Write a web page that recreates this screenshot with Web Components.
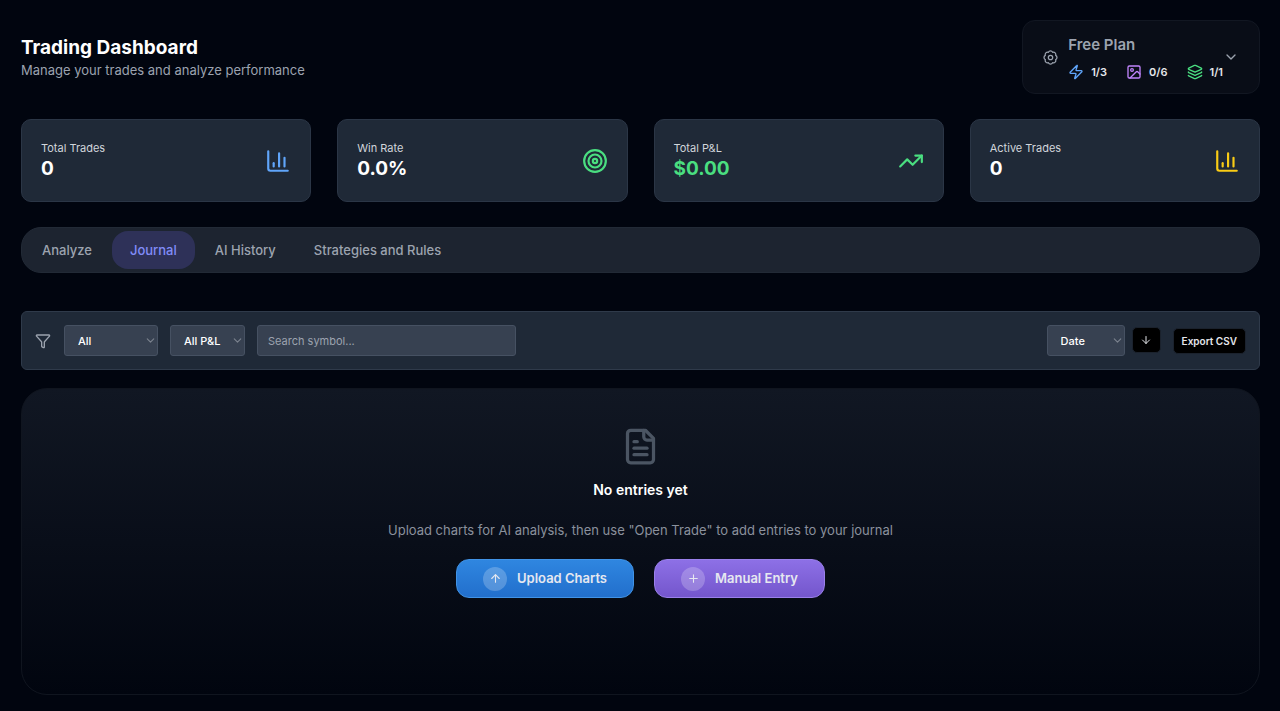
<!DOCTYPE html>
<html lang="en">
<head>
<meta charset="utf-8">
<meta name="viewport" content="width=device-width, initial-scale=1">
<title>Trading Dashboard</title>
<style>
    body{
        background: #01050f;
        color: #ffffff;
        font-family: Inter, "Liberation Sans", sans-serif;
        margin: 0;
    }
</style>
</head>
<body>
<trading-dashboard></trading-dashboard>

<script>
const ICONS = {
    gear: `<path d="M8.6 3.7a3.8 3.8 0 0 1 6.8 0 3.8 3.8 0 0 1 4.9 4.9 3.8 3.8 0 0 1 0 6.8 3.8 3.8 0 0 1-4.9 4.9 3.8 3.8 0 0 1-6.8 0 3.8 3.8 0 0 1-4.9-4.9 3.8 3.8 0 0 1 0-6.8 3.8 3.8 0 0 1 4.9-4.9z"/><circle cx="12" cy="12" r="3.5"/>`,
    zap: `<path d="M4 14a1 1 0 0 1-.78-1.63l9.9-10.2a.5.5 0 0 1 .86.46l-1.92 6.02A1 1 0 0 0 13 10h7a1 1 0 0 1 .78 1.63l-9.9 10.2a.5.5 0 0 1-.86-.46l1.92-6.02A1 1 0 0 0 11 14z"/>`,
    image: `<rect width="18" height="18" x="3" y="3" rx="2"/><circle cx="9" cy="9" r="2"/><path d="m21 15-3.09-3.09a2 2 0 0 0-2.82 0L6 21"/>`,
    layers: `<path d="M12.83 2.18a2 2 0 0 0-1.66 0L2.6 6.08a1 1 0 0 0 0 1.83l8.58 3.91a2 2 0 0 0 1.66 0l8.58-3.9a1 1 0 0 0 0-1.83z"/><path d="M2 12a1 1 0 0 0 .58.91l8.6 3.91a2 2 0 0 0 1.65 0l8.58-3.9A1 1 0 0 0 22 12"/><path d="M2 17a1 1 0 0 0 .58.91l8.6 3.91a2 2 0 0 0 1.65 0l8.58-3.9A1 1 0 0 0 22 17"/>`,
    chevron: `<path d="m6 9 6 6 6-6"/>`,
    chart: `<path d="M3 3v16a2 2 0 0 0 2 2h16"/><path d="M18 17V9"/><path d="M13 17V5"/><path d="M8 17v-3"/>`,
    target: `<circle cx="12" cy="12" r="10"/><circle cx="12" cy="12" r="6"/><circle cx="12" cy="12" r="2"/>`,
    trend: `<path d="M16 7h6v6"/><path d="m22 7-8.5 8.5-5-5L2 17"/>`,
    funnel: `<path d="M10 20a1 1 0 0 0 .55.9l2 1A1 1 0 0 0 14 21v-7a2 2 0 0 1 .52-1.34L21.74 4.67A1 1 0 0 0 21 3H3a1 1 0 0 0-.74 1.67l7.22 7.99A2 2 0 0 1 10 14z"/>`,
    file: `<path d="M15 2H6a2 2 0 0 0-2 2v16a2 2 0 0 0 2 2h12a2 2 0 0 0 2-2V7z"/><path d="M14 2v4a2 2 0 0 0 2 2h4"/><path d="M10 9H8"/><path d="M16 13H8"/><path d="M16 17H8"/>`,
    up: `<path d="m5 12 7-7 7 7"/><path d="M12 19V5"/>`,
    down: `<path d="M12 5v14"/><path d="m19 12-7 7-7-7"/>`,
    plus: `<path d="M5 12h14"/><path d="M12 5v14"/>`
};

class UiIcon extends HTMLElement
{
    connectedCallback()
    {
        const size = this.getAttribute("size") || 16;
        const stroke = this.getAttribute("stroke") || 2;
        this.attachShadow({mode: "open"}).innerHTML = `
        <style>
            :host{
                display: inline-flex;
                flex: none;
            }

            svg{
                fill: none;
                stroke: currentColor;
                stroke-linecap: round;
                stroke-linejoin: round;
            }
        </style>
        <svg width="${size}" height="${size}" viewBox="0 0 24 24" stroke-width="${stroke}" aria-hidden="true">${ICONS[this.getAttribute("name")]}</svg>
        `;
    }
}
customElements.define("ui-icon", UiIcon);

class PlanCard extends HTMLElement
{
    connectedCallback()
    {
        this.attachShadow({mode: "open"}).innerHTML = `
        <style>
            :host{
                display: block;
            }

            button{
                align-items: center;
                background: #090d17;
                border: 1px solid #121722;
                border-radius: 13px;
                color: #9ca3af;
                display: flex;
                font: inherit;
                height: 74px;
                padding: 0 20px;
                text-align: left;
            }

            .body{
                display: block;
                margin-left: 10px;
            }

            .name{
                display: block;
                font-size: 15px;
                font-weight: 600;
                line-height: 20px;
            }

            .usage{
                display: flex;
                gap: 19px;
                margin-top: 9px;
            }

            .usage span{
                align-items: center;
                color: #e5e7eb;
                display: flex;
                font-size: 11px;
                font-weight: 600;
                gap: 7px;
                line-height: 16px;
            }

            .blue{ color: #60a5fa; }
            .purple{ color: #c084fc; }
            .green{ color: #4ade80; }
        </style>
        <button type="button">
            <ui-icon name="gear" size="15"></ui-icon>
            <span class="body">
                <span class="name">${this.getAttribute("plan")}</span>
                <span class="usage">
                    <span><ui-icon class="blue" name="zap" size="16"></ui-icon>1/3</span>
                    <span><ui-icon class="purple" name="image" size="16"></ui-icon>0/6</span>
                    <span><ui-icon class="green" name="layers" size="16"></ui-icon>1/1</span>
                </span>
            </span>
            <ui-icon name="chevron" size="16"></ui-icon>
        </button>
        `;
    }
}
customElements.define("plan-card", PlanCard);

class StatCard extends HTMLElement
{
    connectedCallback()
    {
        this.attachShadow({mode: "open"}).innerHTML = `
        <style>
            :host{
                align-items: center;
                background: #1f2937;
                border: 1px solid #2b3646;
                border-radius: 10px;
                box-sizing: border-box;
                display: flex;
                height: 83px;
                justify-content: space-between;
                padding: 0 19px;
            }

            p{
                margin: 0;
            }

            .label{
                color: #d1d5db;
                font-size: 11px;
                line-height: 16px;
            }

            .value{
                color: var(--value-color, #ffffff);
                font-size: 19px;
                font-weight: 700;
                line-height: 26px;
            }

            ui-icon{
                color: var(--icon-color);
            }
        </style>
        <div>
            <p class="label">${this.getAttribute("label")}</p>
            <p class="value"><slot></slot></p>
        </div>
        <ui-icon name="${this.getAttribute("icon")}" size="26"></ui-icon>
        `;
    }
}
customElements.define("stat-card", StatCard);

class TabBar extends HTMLElement
{
    connectedCallback()
    {
        this.attachShadow({mode: "open"}).innerHTML = `
        <style>
            :host{
                background: #1d2430;
                border: 1px solid #222a36;
                border-radius: 20px;
                box-sizing: border-box;
                display: flex;
                gap: 2px;
                padding: 3px 2px;
            }

            ::slotted(button){
                background: none;
                border: 0;
                border-radius: 16px;
                color: #9ca3af;
                font: 500 13px/18px Inter, "Liberation Sans", sans-serif;
                padding: 10px 18px;
            }

            ::slotted(button[aria-selected="true"]){
                background: #2e3158;
                color: #818cf8;
            }
        </style>
        <slot></slot>
        `;
        this.setAttribute("role", "tablist");
    }
}
customElements.define("tab-bar", TabBar);

class FilterSelect extends HTMLElement
{
    connectedCallback()
    {
        const options = this.getAttribute("options").split(",");
        this.attachShadow({mode: "open"}).innerHTML = `
        <style>
            :host{
                align-items: center;
                color: #7b828e;
                display: inline-grid;
                justify-items: end;
            }

            select,
            ui-icon{
                grid-area: 1 / 1;
            }

            select{
                appearance: none;
                background: #374151;
                border: 1px solid #465162;
                border-radius: 3px;
                color: #ffffff;
                font: 500 11px/16px Inter, "Liberation Sans", sans-serif;
                height: 31px;
                padding: 0 13px;
                width: 100%;
            }

            ui-icon{
                margin-right: 1px;
                pointer-events: none;
            }
        </style>
        <select aria-label="${this.getAttribute("label")}">
            ${options.map(option => `<option>${option}</option>`).join("")}
        </select>
        <ui-icon name="chevron" size="13"></ui-icon>
        `;
    }
}
customElements.define("filter-select", FilterSelect);

class JournalFilters extends HTMLElement
{
    connectedCallback()
    {
        this.attachShadow({mode: "open"}).innerHTML = `
        <style>
            :host{
                align-items: center;
                background: #1f2937;
                border: 1px solid #2f3a4a;
                border-radius: 6px;
                box-sizing: border-box;
                display: flex;
                height: 59px;
                justify-content: space-between;
                padding: 0 13px;
            }

            .group{
                align-items: center;
                display: flex;
                gap: 12px;
            }

            .funnel{
                color: #9ca3af;
                margin-right: 1px;
            }

            .status{ width: 94px; }
            .pnl{ width: 75px; }
            .sort{ width: 78px; }

            input{
                background: #374151;
                border: 1px solid #465162;
                border-radius: 3px;
                box-sizing: border-box;
                color: #ffffff;
                font: 400 11px/16px Inter, "Liberation Sans", sans-serif;
                height: 31px;
                padding: 0 10px;
                width: 259px;
            }

            input::placeholder{
                color: #9ca3af;
            }

            button{
                align-items: center;
                background: #000000;
                border: 1px solid #1b222d;
                border-radius: 5px;
                color: #e5e7eb;
                display: flex;
                font: 600 10px/14px Inter, "Liberation Sans", sans-serif;
                height: 26px;
                justify-content: center;
                padding: 0 8px;
            }

            .order{
                margin: 0 0 2px -5px;
                width: 29px;
            }
        </style>
        <div class="group">
            <ui-icon class="funnel" name="funnel" size="16"></ui-icon>
            <filter-select class="status" label="Trade status" options="All,Open,Closed"></filter-select>
            <filter-select class="pnl" label="Profit and loss" options="All P&amp;L,Profit,Loss"></filter-select>
            <input type="text" placeholder="Search symbol..." aria-label="Search symbol">
        </div>
        <div class="group">
            <filter-select class="sort" label="Sort by" options="Date,Symbol"></filter-select>
            <button class="order" type="button" aria-label="Sort descending"><ui-icon name="down" size="12"></ui-icon></button>
            <button type="button">Export CSV</button>
        </div>
        `;
    }
}
customElements.define("journal-filters", JournalFilters);

class ActionButton extends HTMLElement
{
    connectedCallback()
    {
        this.attachShadow({mode: "open"}).innerHTML = `
        <style>
            :host{
                display: inline-block;
            }

            button{
                align-items: center;
                background: linear-gradient(var(--from), var(--to));
                border: 1px solid var(--edge);
                border-radius: 13px;
                color: #e6e8f0;
                display: flex;
                font: 600 13px/19px Inter, "Liberation Sans", sans-serif;
                gap: 10px;
                height: 39px;
                padding: 0 26px;
            }

            .badge{
                background: rgba(255, 255, 255, 0.22);
                border-radius: 50%;
                display: grid;
                height: 24px;
                place-items: center;
                width: 24px;
            }
        </style>
        <button type="button">
            <span class="badge"><ui-icon name="${this.getAttribute("icon")}" size="13"></ui-icon></span>
            <slot></slot>
        </button>
        `;
    }
}
customElements.define("action-button", ActionButton);

class EmptyState extends HTMLElement
{
    connectedCallback()
    {
        this.attachShadow({mode: "open"}).innerHTML = `
        <style>
            :host{
                align-items: center;
                background: linear-gradient(#111723, #01050f);
                border: 1px solid #10151f;
                border-radius: 26px;
                box-sizing: border-box;
                display: flex;
                flex-direction: column;
                min-height: 307px;
                padding: 38px 20px;
            }

            ui-icon{
                color: #4b5563;
            }

            h2{
                font-size: 14px;
                font-weight: 600;
                line-height: 22px;
                margin: 13px 0 0;
            }

            p{
                color: #8b919d;
                font-size: 13px;
                line-height: 20px;
                margin: 19px 0;
            }

            .actions{
                display: flex;
                gap: 20px;
            }
        </style>
        <ui-icon name="file" size="39"></ui-icon>
        <h2>${this.getAttribute("heading")}</h2>
        <p><slot></slot></p>
        <div class="actions"><slot name="actions"></slot></div>
        `;
    }
}
customElements.define("empty-state", EmptyState);

class TradingDashboard extends HTMLElement
{
    connectedCallback()
    {
        this.attachShadow({mode: "open"}).innerHTML = `
        <style>
            :host{
                display: block;
                padding: 20px 20px 16px 21px;
            }

            header{
                align-items: center;
                display: flex;
                justify-content: space-between;
            }

            h1{
                font-size: 19px;
                font-weight: 700;
                line-height: 27px;
                margin: 0;
            }

            header p{
                color: #9ca3af;
                font-size: 13px;
                line-height: 19px;
                margin: 0;
            }

            .stats{
                display: grid;
                gap: 26px;
                grid-template-columns: repeat(4, 1fr);
                margin: 25px 0;
            }

            .blue{ --icon-color: #60a5fa; }
            .green{ --icon-color: #4ade80; }
            .profit{ --value-color: #4ade80; }
            .yellow{ --icon-color: #facc15; }

            journal-filters{
                margin: 38px 0 18px;
            }

            .upload{
                --from: #2f86e0;
                --to: #226fcc;
                --edge: #4193e6;
            }

            .manual{
                --from: #8d70e6;
                --to: #7456cc;
                --edge: #9a80ea;
            }
        </style>
        <header>
            <div>
                <h1>Trading Dashboard</h1>
                <p>Manage your trades and analyze performance</p>
            </div>
            <plan-card plan="Free Plan"></plan-card>
        </header>
        <main>
            <section class="stats">
                <stat-card class="blue" label="Total Trades" icon="chart">0</stat-card>
                <stat-card class="green" label="Win Rate" icon="target">0.0%</stat-card>
                <stat-card class="green profit" label="Total P&amp;L" icon="trend">$0.00</stat-card>
                <stat-card class="yellow" label="Active Trades" icon="chart">0</stat-card>
            </section>
            <tab-bar>
                <button type="button" role="tab" aria-selected="false">Analyze</button>
                <button type="button" role="tab" aria-selected="true">Journal</button>
                <button type="button" role="tab" aria-selected="false">AI History</button>
                <button type="button" role="tab" aria-selected="false">Strategies and Rules</button>
            </tab-bar>
            <journal-filters></journal-filters>
            <empty-state heading="No entries yet">
                Upload charts for AI analysis, then use "Open Trade" to add entries to your journal
                <action-button slot="actions" class="upload" icon="up">Upload Charts</action-button>
                <action-button slot="actions" class="manual" icon="plus">Manual Entry</action-button>
            </empty-state>
        </main>
        `;
    }
}
customElements.define("trading-dashboard", TradingDashboard);
</script>
</body>
</html>
